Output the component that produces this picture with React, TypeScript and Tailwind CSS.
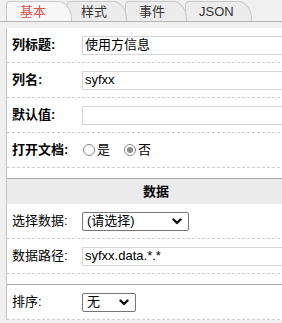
import React from "react";

const tabs = [
  { label: "基本", w: "w-[66px]", ml: "ml-[6px]", z: "z-40", active: true },
  { label: "样式", w: "w-[60px]", ml: "-ml-[5px]", z: "z-30", active: false },
  { label: "事件", w: "w-[62px]", ml: "-ml-[2px]", z: "z-20", active: false },
  { label: "JSON", w: "w-[67px]", ml: "-ml-[2px]", z: "z-10", active: false },
];

function Chevron() {
  return (
    <svg width="10" height="7" viewBox="0 0 10 7" className="shrink-0">
      <path d="M1.5 1.5 L5 5 L8.5 1.5" fill="none" stroke="#111" strokeWidth="2.4" strokeLinecap="round" strokeLinejoin="round" />
    </svg>
  );
}

function Radio({ checked, label }: { checked?: boolean; label: string }) {
  return (
    <span className="inline-flex items-center">
      <span className="flex h-[12px] w-[12px] items-center justify-center rounded-full border border-[#8a8a8a] bg-white">
        {checked && <span className="h-[6px] w-[6px] rounded-full bg-[#8a8a8a]" />}
      </span>
      <span className="ml-[2px]">{label}</span>
    </span>
  );
}

function Row({ label, bold, children }: { label: string; bold?: boolean; children: React.ReactNode }) {
  return (
    <div className="flex h-[35px] items-center border-b border-dashed border-[#cfcfcf]">
      <div className={`w-[75px] shrink-0 pl-[5px] text-[13px] text-black ${bold ? "font-bold" : ""}`}>{label}</div>
      <div className="flex flex-1 items-center">{children}</div>
    </div>
  );
}

function TextInput({ value }: { value: string }) {
  return (
    <div className="flex h-[19px] flex-1 items-center border border-[#d6d6d6] bg-white px-[2px] text-[13px] text-black">
      {value}
    </div>
  );
}

function Select({ value, width }: { value: string; width: string }) {
  return (
    <div className={`flex h-[19px] ${width} items-center justify-between rounded-[2px] border border-[#767676] bg-white pl-[4px] pr-[6px] text-[13px] text-black`}>
      <span>{value}</span>
      <Chevron />
    </div>
  );
}

export default function App() {
  return (
    <div className="h-[323px] w-[282px] overflow-hidden bg-[#f0f0f0] font-['Liberation_Sans','Noto_Sans_CJK_SC',sans-serif]">
      <div className="flex h-[22px] items-end border-b border-[#b5b5b5]">
        {tabs.map((t) => (
          <div
            key={t.label}
            className={`relative ${t.z} ${t.ml} ${t.w} flex h-[20px] items-center rounded-tl-[4px] rounded-tr-[14px_18px] border border-b-0 border-[#c9c9c9] pl-[13px] text-[13px] ${
              t.active ? "bg-[#f7f7f7] text-[#d9534f]" : "bg-[#ececec] text-[#333]"
            }`}
          >
            {t.label}
          </div>
        ))}
      </div>

      <div className="ml-[6px] mt-[6px] w-[299px] border-l border-[#c4c4c4] bg-white">
        <div className="pb-[10px]">
          <Row label="列标题:" bold>
            <TextInput value="使用方信息" />
          </Row>
          <Row label="列名:" bold>
            <TextInput value="syfxx" />
          </Row>
          <Row label="默认值:" bold>
            <TextInput value="" />
          </Row>
          <Row label="打开文档:" bold>
            <div className="flex items-center gap-[14px] pl-[1px] text-[13px] text-black">
              <Radio label="是" />
              <Radio label="否" checked />
            </div>
          </Row>
        </div>

        <div className="border-t border-[#aaa] pb-[10px]">
          <div className="flex h-[25px] items-center justify-center bg-[#ebebeb] text-[13px] font-bold text-black">
            数据
          </div>
          <Row label="选择数据:">
            <Select value="(请选择)" width="w-[107px]" />
          </Row>
          <Row label="数据路径:">
            <TextInput value="syfxx.data.*.*" />
          </Row>
        </div>

        <div className="border-t border-[#aaa]">
          <Row label="排序:">
            <Select value="无" width="w-[54px]" />
          </Row>
        </div>
      </div>
    </div>
  );
}
